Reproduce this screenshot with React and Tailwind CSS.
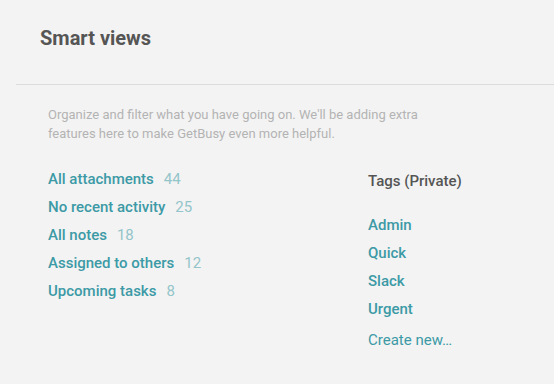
const views = [
  { label: "All attachments", count: 44 },
  { label: "No recent activity", count: 25 },
  { label: "All notes", count: 18 },
  { label: "Assigned to others", count: 12 },
  { label: "Upcoming tasks", count: 8 }
];

const tags = ["Admin", "Quick", "Slack", "Urgent"];

export default function App() {
  return (
    <div className="h-[384px] w-[554px] overflow-hidden bg-[#f3f3f3] font-['Roboto',sans-serif]">
      <header className="pl-10 pt-[25px] pb-[33px]">
        <h1 className="text-[20px] leading-[26px] font-bold text-[#555555]">Smart views</h1>
      </header>
      <div className="ml-4 h-px bg-[#dcdcdc]" />
      <div className="pl-12 pr-6">
        <p className="mt-[20px] text-[13px] leading-[19px] text-[#b3b3b3]">
          Organize and filter what you have going on. We'll be adding extra
          <br />
          features here to make GetBusy even more helpful.
        </p>
        <div className="mt-[22px] flex">
          <ul className="w-[320px]">
            {views.map((view) => (
              <li key={view.label} className="flex gap-[10px] text-[15px] leading-7">
                <a className="font-medium text-[#3c9aa6]">{view.label}</a>
                <span className="text-[#93c5ca]">{view.count}</span>
              </li>
            ))}
          </ul>
          <div className="flex flex-col">
            <h2 className="pt-[2px] text-[15px] leading-7 font-medium text-[#555555]">Tags (Private)</h2>
            <ul className="mt-[16px]">
              {tags.map((tag) => (
                <li key={tag} className="text-[15px] leading-7 font-medium text-[#3c9aa6]">
                  {tag}
                </li>
              ))}
            </ul>
            <a className="mt-[3px] text-[15px] leading-7 text-[#3c9aa6]">Create new…</a>
          </div>
        </div>
      </div>
    </div>
  );
}
